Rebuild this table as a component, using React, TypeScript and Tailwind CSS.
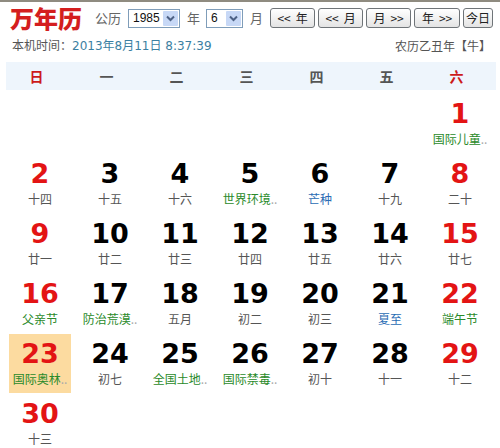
import React from "react";

type Cell = { d: number; sub: string; kind?: "fest" | "term"; hl?: boolean } | null;

const weeks: Cell[][] = [
  [null, null, null, null, null, null, { d: 1, sub: "国际儿童", kind: "fest" }],
  [
    { d: 2, sub: "十四" },
    { d: 3, sub: "十五" },
    { d: 4, sub: "十六" },
    { d: 5, sub: "世界环境", kind: "fest" },
    { d: 6, sub: "芒种", kind: "term" },
    { d: 7, sub: "十九" },
    { d: 8, sub: "二十" },
  ],
  [
    { d: 9, sub: "廿一" },
    { d: 10, sub: "廿二" },
    { d: 11, sub: "廿三" },
    { d: 12, sub: "廿四" },
    { d: 13, sub: "廿五" },
    { d: 14, sub: "廿六" },
    { d: 15, sub: "廿七" },
  ],
  [
    { d: 16, sub: "父亲节", kind: "fest" },
    { d: 17, sub: "防治荒漠", kind: "fest" },
    { d: 18, sub: "五月" },
    { d: 19, sub: "初二" },
    { d: 20, sub: "初三" },
    { d: 21, sub: "夏至", kind: "term" },
    { d: 22, sub: "端午节", kind: "fest" },
  ],
  [
    { d: 23, sub: "国际奥林", kind: "fest", hl: true },
    { d: 24, sub: "初七" },
    { d: 25, sub: "全国土地", kind: "fest" },
    { d: 26, sub: "国际禁毒", kind: "fest" },
    { d: 27, sub: "初十" },
    { d: 28, sub: "十一" },
    { d: 29, sub: "十二" },
  ],
  [{ d: 30, sub: "十三" }, null, null, null, null, null, null],
];

const heads = ["日", "一", "二", "三", "四", "五", "六"];

const cjk = { fontFamily: '"DejaVu Sans", "Noto Sans CJK SC", sans-serif' };

function FakeSelect({ value, width }: { value: string; width: number }) {
  return (
    <div
      className="flex h-[19px] items-stretch border border-[#7f9db9] bg-white"
      style={{ width }}
    >
      <div className="flex flex-1 items-center pl-[4px] text-[12px] leading-none text-[#111]" style={{ fontFamily: '"Liberation Sans", sans-serif' }}>
        {value}
      </div>
      <div className="m-[1px] flex w-[15px] items-center justify-center rounded-[1px] bg-[#c7d8f6]">
        <svg width="9" height="7" viewBox="0 0 9 7">
          <path d="M1 1.5 L4.5 5 L8 1.5" fill="none" stroke="#4d6185" strokeWidth="2" />
        </svg>
      </div>
    </div>
  );
}

function Btn({ children, w }: { children: React.ReactNode; w: number }) {
  return (
    <div
      className="flex h-[20px] items-center justify-center gap-[5px] rounded-[3px] border border-[#6f7478] bg-gradient-to-b from-white to-[#e4e4e4] text-[12px] text-[#222]"
      style={{ width: w, fontFamily: '"Noto Sans CJK SC", sans-serif' }}
    >
      {children}
    </div>
  );
}

export default function App() {
  return (
    <div className="relative h-[448px] w-[500px] overflow-hidden border-t-2 border-[#8f8b80] bg-white" style={{ fontFamily: '"Noto Sans CJK SC", sans-serif' }}>
      <div className="flex h-[30px] items-center pt-[2px]">
        <div className="ml-[10px] w-[76px] text-[24px] font-black leading-none tracking-[0px] text-[#d41e1e]" style={{ fontFamily: '"Noto Sans CJK SC", serif' }}>
          万年历
        </div>
        <div className="ml-[9px] text-[13px] text-[#666]">公历</div>
        <div className="ml-[7px]">
          <FakeSelect value="1985" width={52} />
        </div>
        <div className="ml-[7px] text-[13px] text-[#666]">年</div>
        <div className="ml-[6px]">
          <FakeSelect value="6" width={37} />
        </div>
        <div className="ml-[7px] text-[13px] text-[#666]">月</div>
        <div className="ml-[7px] flex gap-[3px]">
          <Btn w={45}><span>{"<<"}</span><span>年</span></Btn>
          <Btn w={45}><span>{"<<"}</span><span>月</span></Btn>
          <Btn w={45}><span>月</span><span>{">>"}</span></Btn>
          <Btn w={46}><span>年</span><span>{">>"}</span></Btn>
          <Btn w={30}>今日</Btn>
        </div>
      </div>
      <div className="mt-[6px] flex h-[16px] items-center justify-between pl-[12px] pr-[9px] text-[12px]">
        <div className="text-[#555]" style={cjk}>
          本机时间：<span className="text-[#3b7fa2]">2013年8月11日 8:37:39</span>
        </div>
        <div className="text-[#555]">农历乙丑年【牛】</div>
      </div>
      <div className="ml-[6px] mt-[8px] w-[490px]">
        <div className="grid h-[28px] grid-cols-7 bg-[#eef5fc]">
          {heads.map((h, i) => (
            <div
              key={h}
              className={`flex items-center justify-center pr-[9px] text-[14px] font-bold ${i === 0 || i === 6 ? "text-[#cc1a1a]" : "text-[#555]"}`}
            >
              {h}
            </div>
          ))}
        </div>
        <div className="mt-[4px] flex flex-col">
          {weeks.map((w, ri) => (
            <div key={ri} className="grid h-[60px] grid-cols-7">
              {w.map((c, ci) => (
                <div key={ci} className="flex justify-center pr-[2px]">
                  {c && (
                    <div
                      className={`flex h-[59px] w-[62px] flex-col items-center ${c.hl ? "bg-[#fcdba0]" : ""}`}
                    >
                      <div
                        className={`mt-[6px] h-[28px] text-[27px] font-bold leading-[28px] ${ci === 0 || ci === 6 ? "text-[#e31414]" : "text-black"}`}
                        style={{ fontFamily: '"DejaVu Sans", sans-serif' }}
                      >
                        {c.d}
                      </div>
                      <div
                        className={`mt-[3px] whitespace-nowrap text-[12px] leading-[16px] ${c.kind === "fest" ? "text-[#2a8a2a]" : c.kind === "term" ? "text-[#2a6cb4]" : "text-[#555]"}`}
                      >
                        {c.sub}
                        {c.sub.length === 4 && c.kind === "fest" ? (
                          <span className="text-[#aaa]">..</span>
                        ) : null}
                      </div>
                    </div>
                  )}
                </div>
              ))}
            </div>
          ))}
        </div>
      </div>
    </div>
  );
}
